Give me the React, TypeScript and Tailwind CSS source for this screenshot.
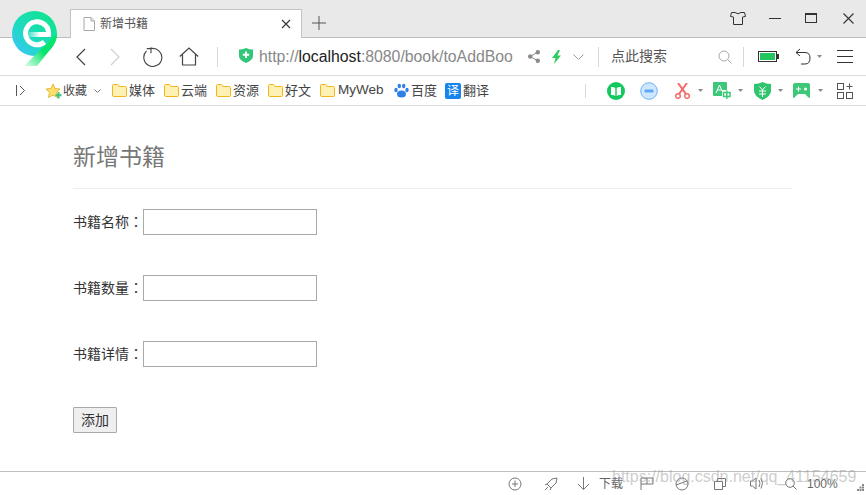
import React from "react";

const S = ({ w, h, children, className = "" }: { w: number; h: number; children: React.ReactNode; className?: string }) => (
  <svg width={w} height={h} viewBox={`0 0 ${w} ${h}`} fill="none" className={`shrink-0 ${className}`}>{children}</svg>
);

const Folder = () => (
  <S w={15} h={13}>
    <path d="M0.5 11V1.5Q0.5 0.5 1.5 0.5H5.5L7 2.5H13.5Q14.5 2.5 14.5 3.5V11.5Q14.5 12.5 13.5 12.5H1.5Q0.5 12.5 0.5 11Z" fill="#fff0b3" stroke="#f2b61c" />
  </S>
);

const Caret = ({ className = "" }: { className?: string }) => (
  <S w={5} h={3} className={className}><path d="M0 0H5L2.5 3Z" fill="#8a8a8a" /></S>
);

const Bookmark = ({ label, wide }: { label: string; wide?: boolean }) => (
  <div className="flex items-center gap-[2px]">
    <Folder />
    <span className={wide ? "ml-px w-[45px] text-[13.5px]" : ""}>{label}</span>
  </div>
);

const Field = ({ label }: { label: string }) => (
  <div className="flex items-center h-[26px] mb-[40px]">
    <label className="w-[70px] text-[14px] text-[#333] whitespace-nowrap">
      {label}
      <span className="font-['Noto_Sans_CJK_TC']">：</span>
    </label>
    <input type="text" className="w-[174px] h-[26px] border border-[#a9a9a9] bg-white" />
  </div>
);

export default function App() {
  return (
    <div className="relative w-[866px] h-[495px] overflow-hidden bg-white flex flex-col font-['Liberation_Sans','Noto_Sans_CJK_SC',sans-serif] text-[13px] text-[#444]">
      {/* logo */}
      <div className="absolute left-[11px] top-[10px]">
        <svg width="48" height="57" viewBox="0 0 48 57" fill="none">
          <defs>
            <linearGradient id="lg" x1="0.1" y1="0.9" x2="0.9" y2="0.1">
              <stop offset="0" stopColor="#38c6f4" />
              <stop offset="0.4" stopColor="#1ddbc0" />
              <stop offset="1" stopColor="#0fe48a" />
            </linearGradient>
            <linearGradient id="tail" x1="1" y1="0" x2="0" y2="1">
              <stop offset="0" stopColor="#08e56c" />
              <stop offset="0.5" stopColor="#08e56c" />
              <stop offset="1" stopColor="#e8fcf0" />
            </linearGradient>
            <linearGradient id="bar" x1="0" y1="0" x2="1" y2="0">
              <stop offset="0" stopColor="#ffffff" stopOpacity="0" />
              <stop offset="0.55" stopColor="#ffffff" />
              <stop offset="1" stopColor="#ffffff" />
            </linearGradient>
          </defs>
          <circle cx="23.5" cy="23.5" r="22.5" fill="url(#lg)" />
          <path d="M46 23Q46 30 42 36L26 56H13L26 43Q30 40 46 23Z" fill="url(#tail)" />
          <path d="M37.5 24.5A11.5 11.5 0 1 0 33.5 32" stroke="#fff" strokeWidth="5" />
          <rect x="15" y="22" width="25" height="5" fill="url(#bar)" />
        </svg>
      </div>

      {/* tab strip */}
      <div className="h-[38px] shrink-0 bg-[#e9e9e9] border-b border-[#bdbdbd] flex items-end pl-[70px]">
        <div className="w-[232px] h-[29px] -mb-px bg-white border border-b-0 border-[#c4c4c4] flex items-center pl-[12px] pr-[10px] text-[12px] text-[#555]">
          <S w={12} h={14}>
            <path d="M1 .5H8L11.5 4V13.5H1Z" fill="#fff" stroke="#a8a8a8" /><path d="M8 .5V4H11.5" stroke="#a8a8a8" />
          </S>
          <span className="ml-[5px]">新增书籍</span>
          <S w={10} h={10} className="ml-auto"><path d="M1 1L9 9M9 1L1 9" stroke="#333" strokeWidth="1.1" /></S>
        </div>
        <div className="h-[28px] flex items-center pl-[10px]">
          <S w={14} h={14}><path d="M7 0V14M0 7H14" stroke="#555" /></S>
        </div>
        <div className="ml-auto self-start flex items-center h-[36px] pr-[12px]">
          <S w={16} h={13} className="mr-[23px]"><path d="M5 .5H1.5L.5 4.5L3.5 5V12.5H12.5V5L15.5 4.5L14.5 .5H11Q8 3 5 .5Z" stroke="#333" /></S>
          <div className="w-[12px] h-px bg-[#333] mr-[24px] mt-px" />
          <div className="w-[12px] h-[10px] border border-t-2 border-[#333] mr-[26px]" />
          <S w={11} h={11}><path d="M.5 .5L10.5 10.5M10.5 .5L.5 10.5" stroke="#333" strokeWidth="1.1" /></S>
        </div>
      </div>

      {/* address bar */}
      <div className="h-[38px] shrink-0 border-b border-[#dcdcdc] flex items-center pl-[75px]">
        <S w={11} h={18}><path d="M10 1L2 9L10 17" stroke="#444" strokeWidth="1.2" /></S>
        <S w={11} h={18} className="ml-[24px]"><path d="M1 1L9 9L1 17" stroke="#cfcfcf" strokeWidth="1.2" /></S>
        <S w={20} h={20} className="ml-[22px]"><path d="M3.5 4A9 9 0 1 0 8 1.6M8 .3V6.2M3.8 1.6H8" stroke="#444" strokeWidth="1.1" /></S>
        <S w={20} h={19} className="ml-[16px]"><path d="M.8 9.5L10 1L19.2 9.5M3.5 7.5V18H16.5V7.5" stroke="#444" strokeWidth="1.2" /></S>
        <div className="w-px h-[20px] bg-[#d8d8d8] ml-[18px]" />
        <S w={14} h={15} className="ml-[21px] -mt-[3px]">
          <path d="M0 1.5Q3.5 1.5 7 0Q10.5 1.5 14 1.5V8Q14 12 7 15Q0 12 0 8Z" fill="#30c77b" />
          <path d="M7 3.5V10M3.8 6.8H10.2" stroke="#fff" strokeWidth="2" />
        </S>
        <div className="ml-[6px] w-[255px] shrink-0 text-[15.8px] whitespace-nowrap text-[#888]">
          http://<span className="text-[#222]">localhost</span>:8080/book/toAddBoo
        </div>
        <S w={12} h={13} className="ml-[14px]">
          <circle cx="9.8" cy="2.2" r="2.2" fill="#8a8a8a" /><circle cx="2.2" cy="6.5" r="2.2" fill="#8a8a8a" /><circle cx="9.8" cy="10.8" r="2.2" fill="#8a8a8a" />
          <path d="M9.8 2.2L2.2 6.5L9.8 10.8" stroke="#8a8a8a" />
        </S>
        <S w={9} h={14} className="ml-[12px]"><path d="M6 0L0 8H3.5L2 14L9 5.5H5.5L8 0Z" fill="#2ecb5e" /></S>
        <S w={11} h={6} className="ml-[12px]"><path d="M.5 .5L5.5 5.5L10.5 .5" stroke="#999" /></S>
        <div className="w-px h-[20px] bg-[#d8d8d8] ml-[14px]" />
        <span className="ml-[12px] text-[14px] text-[#555] whitespace-nowrap">点此搜索</span>
        <S w={14} h={14} className="ml-[51px]"><circle cx="6" cy="6" r="5" stroke="#aaa" /><path d="M9.5 9.5L13.5 13.5" stroke="#aaa" /></S>
        <div className="w-px h-[20px] bg-[#d8d8d8] ml-[11px]" />
        <S w={21} h={11} className="ml-[14px]">
          <rect x=".5" y=".5" width="18" height="10" stroke="#333" fill="#fff" /><rect x="2" y="2" width="15" height="7" fill="#22c55e" /><rect x="19" y="3" width="2" height="5" fill="#333" />
        </S>
        <S w={16} h={17} className="ml-[16px]"><path d="M5 1L1 4.5L5 8M1 4.5H10Q15 4.5 15 10Q15 16 10 16H6" stroke="#333" /></S>
        <Caret className="ml-[6px]" />
        <div className="ml-[15px] flex flex-col gap-[5px] w-[16px]">
          <div className="h-px bg-[#333]" /><div className="h-px bg-[#333]" /><div className="h-px bg-[#333]" />
        </div>
      </div>

      {/* bookmarks */}
      <div className="h-[30px] shrink-0 border-b border-[#dcdcdc] flex items-center pl-[16px] text-[13px] text-[#444] whitespace-nowrap">
        <S w={9} h={11}><path d="M.5 0V11" stroke="#555" /><path d="M4 1L8.5 5.5L4 10" stroke="#555" /></S>
        <S w={18} h={16} className="ml-[20px]">
          <path d="M8 1L10 5.5L15 6L11.5 9.5L12.5 14.5L8 12L3.5 14.5L4.5 9.5L1 6L6 5.5Z" fill="#ffdf6b" stroke="#eab93a" />
          <path d="M13.5 9V15.5M10.5 12.2H16.5" stroke="#3cc37d" strokeWidth="2" />
        </S>
        <span className="text-[12px]">收藏</span>
        <S w={7} h={4} className="ml-[7px]"><path d="M.5 .5L3.5 3.5L6.5 .5" stroke="#777" /></S>
        <div className="ml-[11px] flex items-center gap-[9px]">
          <Bookmark label="媒体" />
          <Bookmark label="云端" />
          <Bookmark label="资源" />
          <Bookmark label="好文" />
          <Bookmark label="MyWeb" wide />
        </div>
        <S w={15} h={15} className="ml-[11px]">
          <ellipse cx="7.5" cy="11" rx="4.5" ry="3.5" fill="#2f7fe6" /><ellipse cx="2" cy="7" rx="1.7" ry="2.2" fill="#2f7fe6" /><ellipse cx="13" cy="7" rx="1.7" ry="2.2" fill="#2f7fe6" /><ellipse cx="5.3" cy="3" rx="1.7" ry="2.3" fill="#2f7fe6" /><ellipse cx="9.7" cy="3" rx="1.7" ry="2.3" fill="#2f7fe6" />
        </S>
        <span className="ml-[2px]">百度</span>
        <div className="ml-[8px] w-[16px] h-[16px] shrink-0 rounded-[2px] bg-[#1784ee] text-white text-[12px] leading-[16px] text-center">译</div>
        <span className="ml-[2px]">翻译</span>
        <div className="w-px h-[14px] bg-[#d8d8d8] ml-[96px]" />
        <S w={18} h={18} className="ml-[21px]"><circle cx="9" cy="9" r="9" fill="#12c95f" /><path d="M4 5Q6.5 4.5 8.3 6V14Q6.5 12.5 4 13ZM14 5Q11.5 4.5 9.7 6V14Q11.5 12.5 14 13Z" fill="#fff" /></S>
        <S w={18} h={18} className="ml-[15px]"><circle cx="9" cy="9" r="8.3" fill="#cfe6ff" stroke="#6eb1f5" /><rect x="4.5" y="7.5" width="9" height="3" rx="1" fill="#5da8f2" /></S>
        <S w={15} h={16} className="ml-[17px]"><circle cx="3" cy="13" r="2.3" stroke="#f46a6a" strokeWidth="1.5" /><circle cx="12" cy="13" r="2.3" stroke="#f46a6a" strokeWidth="1.5" /><path d="M4 11L12 0M11 11L3 0" stroke="#f46a6a" strokeWidth="2" /></S>
        <Caret className="ml-[8px]" />
        <S w={18} h={17} className="ml-[10px]"><path d="M1 0H13Q14 0 14 1V8H9V14H1Q0 14 0 13V1Q0 0 1 0Z" fill="#3cc878" /><path d="M3 11L6.5 3L9 9M4 8H8" stroke="#fff" /><path d="M10.5 10.5H17V14.5H10.5ZM13.8 8.5V17" stroke="#3cc878" strokeWidth="1.5" /></S>
        <Caret className="ml-[7px]" />
        <S w={17} h={18} className="ml-[11px]"><path d="M0 2Q5 2 8.5 0Q12 2 17 2V9Q17 14 8.5 18Q0 14 0 9Z" fill="#2fc46e" /><path d="M5.5 4.5L8.5 8L11.5 4.5M5 9H12M5 12H12M8.5 8V15" stroke="#fff" /></S>
        <Caret className="ml-[7px]" />
        <S w={17} h={15} className="ml-[10px]"><path d="M2 0H15Q17 0 17 2V14Q17 15 16 15L12 11H5L1 15Q0 15 0 14V2Q0 0 2 0Z" fill="#3cc878" /><path d="M3 6H8M5.5 3.5V8.5" stroke="#fff" /><circle cx="12.5" cy="6" r="1.5" fill="#fff" /></S>
        <Caret className="ml-[8px]" />
        <S w={16} h={16} className="ml-[14px]"><rect x=".5" y=".5" width="6" height="6" stroke="#555" /><rect x=".5" y="9.5" width="6" height="6" stroke="#555" /><rect x="9.5" y="9.5" width="6" height="6" stroke="#555" /><path d="M12.5 .5V6.5M9.5 3.5H15.5" stroke="#555" /></S>
      </div>

      {/* page */}
      <main className="flex-1 pl-[73px] pr-[74px]">
        <h1 className="mt-[37px] h-[29px] leading-[29px] text-[23px] text-[#777] font-normal">新增书籍</h1>
        <div className="mt-[16px] mb-[20px] h-px bg-[#eeeeee]" />
        <Field label="书籍名称" />
        <Field label="书籍数量" />
        <Field label="书籍详情" />
        <button className="w-[44px] h-[26px] bg-[#efefef] border border-[#a9a9a9] rounded-[1px] text-[14px] text-[#333]">添加</button>
      </main>

      {/* status bar */}
      <footer className="relative h-[24px] shrink-0 border-t border-[#bdbdbd] flex items-center pl-[508px] text-[12px] text-[#666] whitespace-nowrap">
        <S w={14} h={14}><circle cx="7" cy="7" r="6" stroke="#777" /><path d="M7 3.5V10M4 7H10" stroke="#777" /></S>
        <S w={14} h={14} className="ml-[22px]"><path d="M13 1L8 2L3 7L7 11L12 6ZM3 7L1 8M7 11L6 13M4 10L1 13" stroke="#777" /></S>
        <S w={13} h={13} className="ml-[19px]"><path d="M6.5 0V12.5M1 7L6.5 12.5L12 7" stroke="#777" /></S>
        <span className="ml-[9px]">下载</span>
        <S w={14} h={13} className="ml-[17px]"><path d="M1 13V1H13V7H1M7 1V7" stroke="#777" /></S>
        <S w={14} h={14} className="ml-[21px]"><circle cx="7" cy="7" r="6" stroke="#777" /><path d="M1 8L12 4" stroke="#777" /></S>
        <S w={12} h={12} className="ml-[25px]"><path d="M3.5 3V.5H11.5V8.5H9M.5 3.5H8.5V11.5H.5Z" stroke="#777" /></S>
        <S w={14} h={13} className="ml-[24px]"><path d="M6 1L2.5 4H.5V9H2.5L6 12ZM9 3Q11 6.5 9 10M11 1.5Q14 6.5 11 11.5" stroke="#777" /></S>
        <S w={12} h={12} className="ml-[21px]"><circle cx="5" cy="5" r="4.3" stroke="#777" /><path d="M8 8L11.5 11.5" stroke="#777" /></S>
        <span className="ml-[10px]">100%</span>
        <S w={7} h={7} className="ml-[19px] mt-[8px]"><path d="M5 0H7V2H5ZM2.5 2.5H4.5V4.5H2.5ZM5 2.5H7V4.5H5ZM0 5H2V7H0ZM2.5 5H4.5V7H2.5ZM5 5H7V7H5Z" fill="#888" /></S>
        <div className="absolute left-[612px] top-[-7px] text-[16px] text-[#999]/50 whitespace-nowrap">https://blog.csdn.net/qq_41154659</div>
      </footer>
    </div>
  );
}
